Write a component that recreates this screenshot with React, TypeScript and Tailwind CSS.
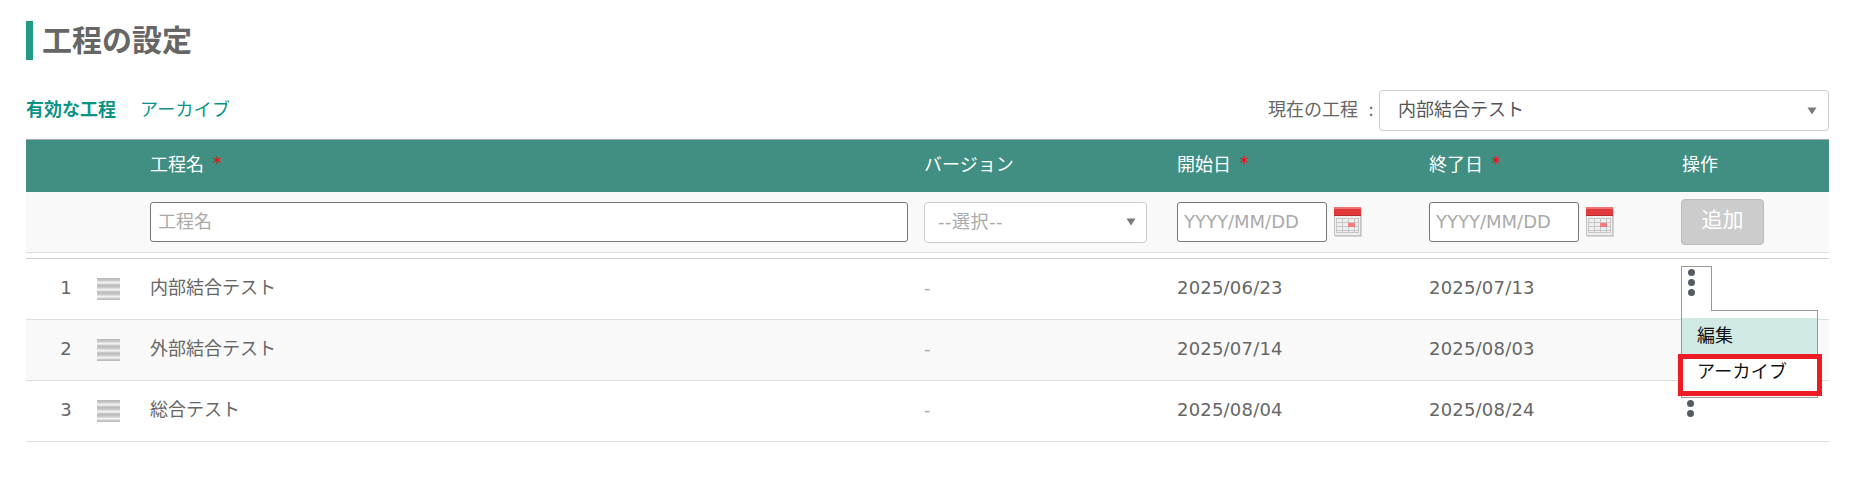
import React from 'react';

const rows = [
  { no: 1, name: '内部結合テスト', start: '2025/06/23', end: '2025/07/13' },
  { no: 2, name: '外部結合テスト', start: '2025/07/14', end: '2025/08/03' },
  { no: 3, name: '総合テスト', start: '2025/08/04', end: '2025/08/24' },
];

const gridCols = 'grid grid-cols-[124px_774px_253px_252px_253px_1fr]';

// one period of the drag handle's soft stripes
const stripe = ['#bcbcbc', '#c2c2c2', '#cccccc', '#dedede', '#f2f2f2', '#e2e2e2', '#cacaca'];

function Required() {
  return <span className="ml-[9px] text-[17px] leading-none text-[#ff0000] relative -top-[2px]">*</span>;
}

function Arrow() {
  return (
    <svg width="10" height="8" viewBox="0 0 10 8" className="shrink-0">
      <path d="M0.5 0.5h9L5 7.5z" fill="#7a7a7a" />
    </svg>
  );
}

function CalendarIcon() {
  return (
    <svg width="28" height="30" viewBox="0 0 28 30" className="shrink-0">
      <rect x="1" y="1" width="27" height="29" fill="#d4d4d4" />
      <rect x="0.5" y="0.5" width="26" height="28" fill="#efefef" stroke="#c4c4c4" />
      <rect x="0" y="0" width="27" height="8" fill="#e03a3c" />
      <rect x="0" y="0" width="27" height="2" fill="#ee7373" />
      <rect x="0" y="8" width="27" height="1" fill="#b92a2c" />
      <path
        d="M2.5 11.5h22M2.5 15.5h22M2.5 19.5h22M2.5 23.5h22M2.5 25.5h22M2.5 11v15M8.5 11v15M14.5 11v15M20.5 11v15M24.5 11v15"
        stroke="#c6c6c6"
        strokeWidth="1"
        fill="none"
      />
      <rect x="14" y="16" width="7" height="4" fill="#f47c80" />
    </svg>
  );
}

function DragHandle() {
  return (
    <svg width="23" height="22" viewBox="0 0 23 22" className="shrink-0">
      {Array.from({ length: 22 }, (_, y) => (
        <rect key={y} y={y} width="23" height="1" fill={stripe[y % stripe.length]} />
      ))}
    </svg>
  );
}

function Dots() {
  return (
    <div className="flex flex-col gap-[3px]">
      <span className="block w-[7px] h-[7px] rounded-full bg-[#555b63]" />
      <span className="block w-[7px] h-[7px] rounded-full bg-[#555b63]" />
      <span className="block w-[7px] h-[7px] rounded-full bg-[#555b63]" />
    </div>
  );
}

function DateInput() {
  return (
    <div className="flex items-center gap-[7px]">
      <input
        placeholder="YYYY/MM/DD"
        className="w-[150px] h-[40px] px-[6px] pb-[2px] bg-white border border-[#767676] rounded-[3px] text-[18px] placeholder:text-[#aaaaaa] outline-none"
      />
      <CalendarIcon />
    </div>
  );
}

function ActionMenu() {
  return (
    <>
      <div className="absolute -left-[1px] top-[7px] z-10 w-[31px] h-[45px] bg-white border border-b-0 border-[#999999] pl-[6px] pt-[2px]">
        <Dots />
      </div>
      <div className="absolute -left-[1px] top-[51px] z-[9] w-[137px] h-[88px] bg-white border border-[#999999] pt-[7px] text-[18px] text-[#111111]">
        <div className="h-[36px] pl-[15px] pb-[2px] flex items-center bg-[#d1eae6]">編集</div>
        <div className="h-[36px] pl-[15px] pb-[2px] flex items-center tracking-[0.3px]">アーカイブ</div>
      </div>
      <div className="absolute -left-[4px] top-[95px] z-20 w-[144px] h-[42px] border-[5px] border-[#ed1c24]" />
    </>
  );
}

export default function App() {
  return (
    <div className="w-[1857px] h-[481px] bg-white pt-[21px] pl-[26px] pr-[28px] text-[18px] text-[#666666] font-['DejaVu_Sans','Noto_Sans_CJK_JP',sans-serif]">
      <h1 className="h-[39px] pl-[9px] border-l-[7px] border-[#1f9a87] flex items-center text-[30px] font-bold text-[#666666]">
        工程の設定
      </h1>

      <div className="mt-[30px] h-[41px] flex items-center justify-between">
        <div className="flex items-center gap-[24px] pb-[2px] text-[#0a9485]">
          <span className="font-bold">有効な工程</span>
          <span className="tracking-[0.3px]">アーカイブ</span>
        </div>
        <div className="flex items-center gap-[5px]">
          <span className="pb-[2px]">現在の工程<span className="ml-[10px]">:</span></span>
          <div className="w-[450px] h-[41px] pl-[18px] pr-[11px] flex items-center justify-between bg-white border border-[#cccccc] rounded-[4px] text-[#555555]">
            <span className="pb-[2px]">内部結合テスト</span>
            <Arrow />
          </div>
        </div>
      </div>

      <div className="mt-[8px]">
        <div className={`${gridCols} h-[53px] pb-[3px] items-center bg-[#418e83] border-t border-[#aaaaaa] text-white`}>
          <span className="col-start-2">工程名<Required /></span>
          <span>バージョン</span>
          <span>開始日<Required /></span>
          <span>終了日<Required /></span>
          <span>操作</span>
        </div>

        <div className={`${gridCols} h-[61px] items-center bg-[#f9f9f9] border-b border-[#dddddd]`}>
          <input
            placeholder="工程名"
            className="col-start-2 w-[758px] h-[40px] px-[7px] pb-[2px] bg-white border border-[#767676] rounded-[3px] placeholder:text-[#aaaaaa] outline-none"
          />
          <div className="w-[223px] h-[41px] pl-[13px] pr-[10px] flex items-center justify-between bg-white border border-[#cccccc] rounded-[4px] text-[#aaaaaa]">
            <span className="pb-[2px] tracking-[0.5px]">--選択--</span>
            <Arrow />
          </div>
          <DateInput />
          <DateInput />
          <button className="-ml-[1px] w-[83px] h-[46px] pb-[2px] bg-[#cccccc] border border-[#bbbbbb] rounded-[4px] text-[21px] text-white">
            追加
          </button>
        </div>

        <div className="mt-[5px] border-t border-[#cccccc]">
          {rows.map((row, i) => (
            <div
              key={row.no}
              className={`${gridCols} h-[61px] items-center border-b border-[#dddddd] ${i === 1 ? 'bg-[#f9f9f9]' : 'bg-white'}`}
            >
              <div className="flex items-center">
                <span className="ml-[20px] w-[40px] pb-[4px] text-center">{row.no}</span>
                <span className="ml-[11px]"><DragHandle /></span>
              </div>
              <span className="pb-[4px]">{row.name}</span>
              <span className="pb-[4px] text-[#aaaaaa]">-</span>
              <span className="pb-[4px] tracking-[0.2px]">{row.start}</span>
              <span className="pb-[4px] tracking-[0.2px]">{row.end}</span>
              <div className="relative self-stretch">
                {i === 0 ? (
                  <ActionMenu />
                ) : (
                  <div className="pl-[5px] pt-[9px]"><Dots /></div>
                )}
              </div>
            </div>
          ))}
        </div>
      </div>
    </div>
  );
}
